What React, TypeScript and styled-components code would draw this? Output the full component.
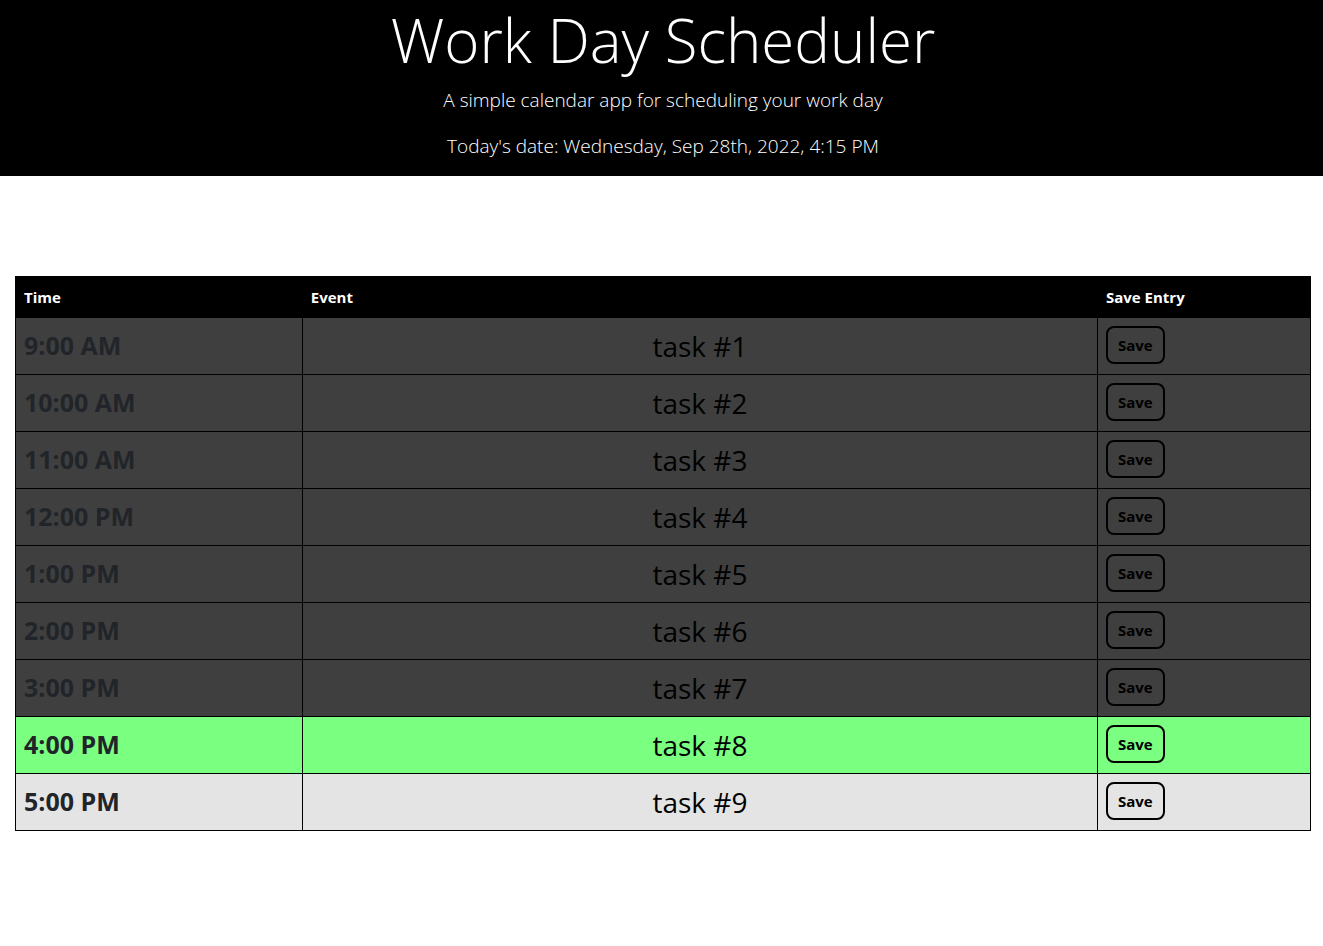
import React from "react";
import styled, { createGlobalStyle } from "styled-components";

type Phase = "past" | "present" | "future";

const phaseColors: Record<Phase, string> = {
  past: "#3f3f3f",
  present: "#7bff81",
  future: "#e4e4e4",
};

const GlobalStyle = createGlobalStyle`
  *, *::before, *::after {
    box-sizing: border-box;
  }

  body {
    margin: 0;
    background: #ffffff;
    color: #212529;
    font-family: "Segoe UI", "Open Sans", sans-serif;
    font-size: 16px;
    line-height: 24px;
  }
`;

const Header = styled.header`
  padding: 0 12px 15px 15px;
  background: #000000;
  color: #ffffff;
  text-align: center;
`;

const Title = styled.h1`
  margin: 0 0 5px;
  font-size: 60px;
  font-weight: 300;
  line-height: 80px;
`;

const Lead = styled.p`
  margin: 0 0 16px;
  font-size: 19px;
  font-weight: 300;
  line-height: 30px;

  &:last-child {
    margin-bottom: 0;
  }
`;

const Main = styled.main`
  padding: 100px 12px 100px 15px;
`;

const ScheduleTable = styled.table`
  width: 100%;
  table-layout: fixed;
  border-collapse: collapse;
`;

const HeadCell = styled.th<{ $width?: string }>`
  width: ${({ $width }) => $width ?? "auto"};
  height: 41px;
  padding: 8px;
  border: 1px solid #000000;
  background: #000000;
  color: #ffffff;
  font-size: 15px;
  font-weight: 700;
  text-align: left;
`;

const HourRow = styled.tr<{ $phase: Phase }>`
  height: 57px;
  background: ${({ $phase }) => phaseColors[$phase]};
`;

const HourCell = styled.th`
  padding: 8px;
  border: 1px solid #000000;
  font-size: 25px;
  font-weight: 700;
  line-height: 38px;
  text-align: left;
  vertical-align: top;
`;

const Cell = styled.td`
  padding: 8px;
  border: 1px solid #000000;
  vertical-align: top;
`;

const EventInput = styled.input`
  display: block;
  width: 100%;
  height: 40px;
  padding: 0;
  border: 0;
  background: transparent;
  color: #000000;
  font-family: inherit;
  font-size: 28px;
  font-weight: 400;
  text-align: center;
`;

const SaveButton = styled.button`
  display: block;
  height: 38px;
  padding: 0 10px;
  border: 2px solid #000000;
  border-radius: 8px;
  background: transparent;
  color: #000000;
  font-family: inherit;
  font-size: 15px;
  font-weight: 700;
  cursor: pointer;
`;

const hours: { time: string; task: string; phase: Phase }[] = [
  { time: "9:00 AM", task: "task #1", phase: "past" },
  { time: "10:00 AM", task: "task #2", phase: "past" },
  { time: "11:00 AM", task: "task #3", phase: "past" },
  { time: "12:00 PM", task: "task #4", phase: "past" },
  { time: "1:00 PM", task: "task #5", phase: "past" },
  { time: "2:00 PM", task: "task #6", phase: "past" },
  { time: "3:00 PM", task: "task #7", phase: "past" },
  { time: "4:00 PM", task: "task #8", phase: "present" },
  { time: "5:00 PM", task: "task #9", phase: "future" },
];

export default function App() {
  return (
    <>
      <GlobalStyle />
      <Header>
        <Title>Work Day Scheduler</Title>
        <Lead>A simple calendar app for scheduling your work day</Lead>
        <Lead>Today's date: Wednesday, Sep 28th, 2022, 4:15 PM</Lead>
      </Header>
      <Main>
        <ScheduleTable>
          <thead>
            <tr>
              <HeadCell scope="col" $width="22.15%">Time</HeadCell>
              <HeadCell scope="col">Event</HeadCell>
              <HeadCell scope="col" $width="16.45%">Save Entry</HeadCell>
            </tr>
          </thead>
          <tbody>
            {hours.map(({ time, task, phase }) => (
              <HourRow key={time} $phase={phase}>
                <HourCell scope="row">{time}</HourCell>
                <Cell>
                  <EventInput type="text" aria-label={`Event at ${time}`} defaultValue={task} />
                </Cell>
                <Cell>
                  <SaveButton type="button">Save</SaveButton>
                </Cell>
              </HourRow>
            ))}
          </tbody>
        </ScheduleTable>
      </Main>
    </>
  );
}
